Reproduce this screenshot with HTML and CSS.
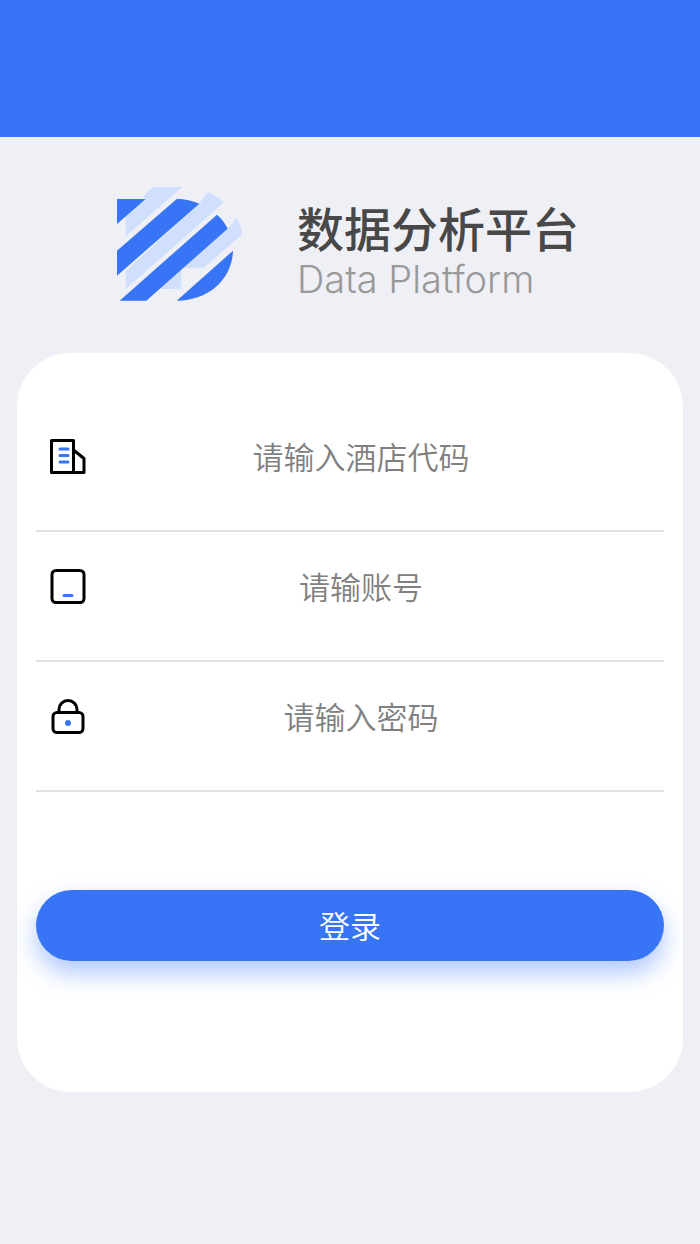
FILE: index.html
```html
<!DOCTYPE html>
<html lang="zh-CN">
<head>
  <meta charset="UTF-8" />
  <meta name="viewport" content="width=device-width, initial-scale=1.0"/>
  <title>数据分析平台</title>

  <link rel="stylesheet" href="styles.css">
</head>
<body>

  <header class="top-bar"></header>

  <main>
    <div class="brand">
      <svg class="logo" viewBox="52 50 375 342" aria-hidden="true">
        <g fill="#d0dffc">
          <path d="M160 50H248L78 198V138L138 86L130 78Z"/>
          <path d="M324 66Q350 76 373 96L78 356V302L298 100Z"/>
          <path d="M412 143Q424 165 427 193L312 292H245V356H178L383 175Z"/>
        </g>
        <g fill="#3875f6">
          <path d="M52 86H138L52 161Z"/>
          <path d="M232 85Q268 86 299 100L52 316V241Z"/>
          <path d="M352 133Q372 150 384 175L140 391H60Z"/>
          <path d="M400 241C398 325 328 391 231 391Z"/>
        </g>
      </svg>
      <div class="brand-text">
        <h1>数据分析平台</h1>
        <div class="subtitle">Data Platform</div>
      </div>
    </div>

    <form class="login-card">
      <div class="field">
        <label for="hotel-code" aria-label="酒店代码">
          <svg class="icon" viewBox="0 0 40 40">
            <path class="line" d="M3.500 4.500H25.500V36.500H3.500ZM25.500 14L36 22.500V36.500H25.500"/>
            <path class="accent" d="M12 13H20M12 19.500H20M12 26H20"/>
          </svg>
        </label>
        <input type="text" id="hotel-code" placeholder="请输入酒店代码">
      </div>

      <div class="field">
        <label for="account" aria-label="账号">
          <svg class="icon" viewBox="0 0 40 40">
            <rect class="line" x="4" y="4.500" width="32" height="32" rx="4"/>
            <path class="accent" d="M16 29.500H24"/>
          </svg>
        </label>
        <input type="text" id="account" placeholder="请输账号">
      </div>

      <div class="field">
        <label for="password" aria-label="密码">
          <svg class="icon" viewBox="0 0 40 40">
            <rect class="line" x="5" y="16.500" width="30" height="20" rx="4"/>
            <path class="line" d="M11 16V13.500A9 9 0 0 1 29 13.500V16"/>
            <circle cx="20" cy="27" r="3" fill="#3875f6"/>
          </svg>
        </label>
        <input type="password" id="password" placeholder="请输入密码">
      </div>

      <button type="submit">登录</button>
    </form>
  </main>

</body>
</html>
```
FILE: styles.css
```css
* {
  box-sizing: border-box;
}

body {
  margin: 0;
  font-family: 'Noto Sans CJK SC', sans-serif;
  background-color: #eff0f5;
  color: #484848;
}

.top-bar {
  height: 137px;
  background-color: #3875f6;
}

main {
  padding: 0 17px 40px;
}

.brand {
  display: flex;
  justify-content: center;
  align-items: flex-start;
  gap: 55px;
  padding: 50px 4px 51px 0;
}

.logo {
  width: 125px;
  height: 114px;
}

.brand-text {
  padding-top: 8px;
  height: 115px;
}

.brand-text h1 {
  margin: 0;
  font-size: 47px;
  font-weight: 500;
  line-height: 64px;
}

.subtitle {
  font-family: 'Inter', sans-serif;
  font-size: 38px;
  font-weight: 300;
  line-height: 40px;
  color: #999;
}

.login-card {
  padding: 49px 19px 131px;
  border-radius: 54px;
  background-color: white;
}

.field {
  display: flex;
  align-items: center;
  height: 130px;
  padding-bottom: 20px;
  border-bottom: 2px solid #e2e2e2;
}

.field label {
  display: flex;
  padding-left: 12px;
}

.icon {
  width: 40px;
  height: 40px;
}

.line {
  fill: none;
  stroke: black;
  stroke-width: 3;
  stroke-linejoin: round;
}

.accent {
  fill: none;
  stroke: #3875f6;
  stroke-width: 3;
  stroke-linecap: round;
}

.field input {
  flex: 1;
  min-width: 0;
  padding: 0 30px 2px 0;
  border: 0;
  outline: none;
  background: none;
  font-family: inherit;
  font-size: 31px;
  font-weight: 350;
  text-align: center;
  color: #484848;
}

.field input::placeholder {
  color: #808080;
  opacity: 1;
}

button {
  display: block;
  width: 100%;
  height: 71px;
  margin-top: 98px;
  padding: 0 0 2px;
  border: 0;
  border-radius: 40px;
  background-color: #3875f6;
  box-shadow: 0 12px 24px rgba(56, 117, 246, 0.4);
  font-family: inherit;
  font-size: 31px;
  font-weight: 350;
  color: white;
  cursor: pointer;
}

button:hover {
  background-color: #2c66e0;
}
```
